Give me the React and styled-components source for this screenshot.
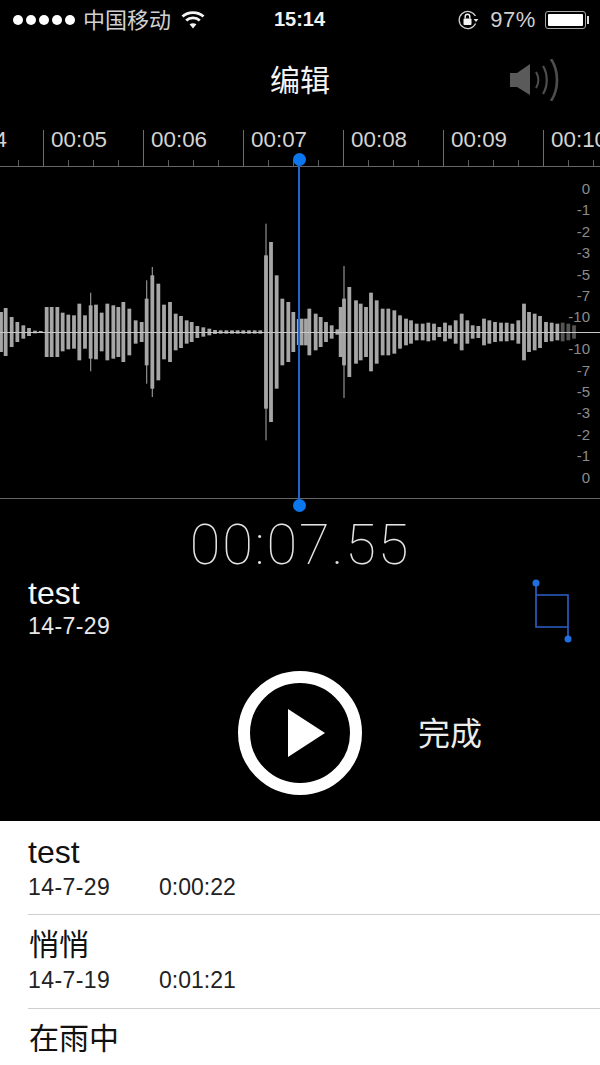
import React from 'react'
import styled, { createGlobalStyle } from 'styled-components'

const GlobalStyle = createGlobalStyle`
  html, body {
    margin: 0;
    padding: 0;
    background: #000;
    overflow: hidden;
  }
  * { box-sizing: border-box; }
`

const SANS = `"Liberation Sans", "Noto Sans CJK SC", sans-serif`

// [x, half height, thin spike half height, dim] in 3x crop units, centre line at 0
const LEFT_BARS = [
  [3, 60], [17, 72], [35, 45], [52, 30], [70, 20], [87, 12], [105, 4], [122, 3],
  [140, 75], [155, 75], [172, 75], [188, 58], [205, 52], [222, 50], [238, 85], [255, 50],
  [272, 80, 118], [288, 82], [305, 58], [322, 85], [340, 80], [355, 75], [370, 90], [388, 70],
  [407, 35], [425, 30], [440, 100, 155], [457, 170, 195], [475, 145], [492, 82], [510, 90],
  [527, 55], [543, 48], [560, 35], [575, 30], [592, 18], [610, 14], [628, 10], [645, 6],
  [662, 5], [679, 5], [696, 5], [713, 5], [730, 5], [747, 5], [764, 5], [781, 5],
  [798, 230, 325], [813, 270], [830, 170], [847, 100], [865, 90], [880, 60],
]
const RIGHT_BARS = [
  [5, 40], [18, 40], [28, 70], [47, 55], [62, 45], [78, 30], [95, 20], [112, 8],
  [122, 75], [132, 100, 198], [148, 135], [168, 95], [182, 85], [198, 75], [213, 118], [230, 95],
  [248, 70], [265, 70], [283, 65], [300, 50], [318, 40], [333, 35], [350, 25], [368, 25],
  [385, 28], [402, 25], [418, 15], [435, 28], [450, 20], [467, 35], [485, 55], [502, 35],
  [518, 20], [535, 18], [552, 40], [568, 35], [585, 30], [603, 28], [620, 28], [637, 25],
  [655, 35], [672, 85], [687, 60], [704, 55], [720, 48], [738, 30], [755, 28], [772, 25],
  [788, 28, 0, true], [805, 25, 0, true], [822, 20, 0, true],
]

const RULER = ['00:04', '00:05', '00:06', '00:07', '00:08', '00:09', '00:10']
const DB_TOP = ['0', '-1', '-2', '-3', '-5', '-7', '-10']
const DB_BOTTOM = ['-10', '-7', '-5', '-3', '-2', '-1', '0']

const RECORDINGS = [
  { title: 'test', date: '14-7-29', length: '0:00:22' },
  { title: '悄悄', date: '14-7-19', length: '0:01:21', cjk: true },
  { title: '在雨中', cjk: true },
]

const Screen = styled.div`
  width: 600px;
  height: 1065px;
  overflow: hidden;
  background: #fff;
  font-family: ${SANS};
`

const Dark = styled.section`
  position: relative;
  height: 821px;
  background: #000;
  color: #fff;
`

const StatusBar = styled.div`
  height: 40px;
  display: grid;
  grid-template-columns: 1fr auto 1fr;
  align-items: center;
  padding: 0 14px 1px 13px;
  font-size: 22px;
  color: #d0d0d0;
`

const StatusLeft = styled.div`
  display: flex;
  align-items: center;
`

const StatusRight = styled.div`
  display: flex;
  align-items: center;
  justify-content: flex-end;
`

const Signal = styled.span`
  width: 10px;
  height: 10px;
  margin-right: 3px;
  border-radius: 50%;
  background: #fff;
`

const Carrier = styled.span`
  margin: -4px 10px 0 5px;
`

const Clock = styled.span`
  font-weight: 700;
  font-size: 20px;
  color: #f2f2f2;
`

const Percent = styled.span`
  margin: 0 9px 0 11px;
  font-size: 22px;
  letter-spacing: 0.6px;
`

const Battery = styled.span`
  position: relative;
  width: 41px;
  height: 18px;
  padding: 2px;
  border: 1px solid #a8a8a8;
  border-radius: 3px;

  &::before {
    content: '';
    display: block;
    height: 100%;
    border-radius: 1px;
    background: #fff;
  }

  &::after {
    content: '';
    position: absolute;
    top: 4px;
    right: -4px;
    width: 2px;
    height: 8px;
    background: #ddd;
  }
`

const NavBar = styled.header`
  height: 80px;
  display: grid;
  grid-template-columns: 1fr auto 1fr;
  align-items: center;
`

const NavTitle = styled.h1`
  grid-column: 2;
  margin: -4px 0 0;
  font-size: 30px;
  font-weight: 400;
  color: #f4f4f4;
`

const SpeakerSlot = styled.div`
  display: flex;
  justify-content: flex-end;
  padding-right: 41px;
`

const Ruler = styled.div`
  height: 46px;
  display: flex;
  align-items: flex-end;
  margin-left: -57px;
  width: 700px;
`

const RulerCell = styled.div`
  flex: 0 0 100px;
  height: 36px;
  padding: 0 0 0 7px;
  border-left: 1px solid #6e6e6e;
  font-size: 22.4px;
  line-height: 20px;
  color: #d4d4d4;
  white-space: nowrap;
  background:
    linear-gradient(#5c5c5c, #5c5c5c) 24px 100% / 1px 6px no-repeat,
    linear-gradient(#5c5c5c, #5c5c5c) 49px 100% / 1px 6px no-repeat,
    linear-gradient(#5c5c5c, #5c5c5c) 74px 100% / 1px 6px no-repeat;
`

const Wave = styled.div`
  position: relative;
  height: 333px;
  border-top: 1px solid #666;
  border-bottom: 1px solid #666;
`

const WaveSvg = styled.svg`
  display: block;
  width: 600px;
  height: 331px;
  filter: blur(0.35px);
`

const DbScale = styled.div`
  position: absolute;
  top: 11px;
  right: 10px;
  display: flex;
  flex-direction: column;
  gap: 10.5px;
`

const DbGroup = styled.div`
  display: flex;
  flex-direction: column;
  align-items: flex-end;
`

const DbLabel = styled.span`
  height: 21.4px;
  font-size: 15px;
  line-height: 21.4px;
  color: #8c8c8c;
`

const Playhead = styled.div`
  position: absolute;
  top: 160px;
  left: 298px;
  width: 2px;
  height: 346px;
  background: #2164cc;

  &::before,
  &::after {
    content: '';
    position: absolute;
    left: -5px;
    width: 13px;
    height: 13px;
    border-radius: 50%;
    background: #0c76ee;
  }

  &::before { top: -7px; }
  &::after { bottom: -6px; }
`

const Timer = styled.div`
  padding-top: 18px;
  height: 74px;
  text-align: center;
  font-family: Roboto, Inter, sans-serif;
  font-weight: 100;
  font-size: 56px;
  line-height: 56px;
  letter-spacing: 1.8px;
  color: #e4e4e4;
`

const InfoRow = styled.div`
  display: flex;
  justify-content: space-between;
  height: 98px;
  padding: 2px 28px 0 28px;
`

const InfoTitle = styled.div`
  font-size: 32px;
  line-height: 36px;
  color: #f6f6f6;
`

const InfoDate = styled.div`
  margin-top: 2px;
  font-size: 23px;
  line-height: 26px;
  letter-spacing: 0.4px;
  color: #e8e8e8;
`

const CropButton = styled.div`
  margin-top: 3px;
`

const Controls = styled.div`
  display: grid;
  grid-template-columns: 1fr auto 1fr;
  align-items: center;
`

const PlayButton = styled.div`
  grid-column: 2;
  width: 124px;
  height: 124px;
  display: flex;
  align-items: center;
  justify-content: center;
  padding-left: 12px;
  border: 12px solid #fff;
  border-radius: 50%;
`

const Triangle = styled.span`
  width: 0;
  height: 0;
  border-left: 37px solid #fff;
  border-top: 24px solid transparent;
  border-bottom: 24px solid transparent;
`

const DoneLabel = styled.span`
  margin: -4px 0 0 56px;
  font-size: 32px;
  color: #ececec;
`

const List = styled.ul`
  margin: 0;
  padding: 0;
  list-style: none;
  color: #111;
`

const Row = styled.li`
  height: 94px;
  margin-left: 28px;
  padding-top: 13px;
  border-bottom: 1px solid #cfcfcf;

  &:last-child { border-bottom: 0; }
`

const RowTitle = styled.div`
  height: 36px;
  font-size: ${props => (props.$cjk ? '30px' : '32px')};
  line-height: 36px;
  ${props => props.$cjk && 'margin: -1px 0 1px 1px;'}
`

const RowMeta = styled.div`
  display: flex;
  margin-top: 4px;
  font-size: 23px;
  line-height: 26px;
  color: #222;
`

const RowDate = styled.span`
  width: 131px;
  letter-spacing: 0.4px;
`

function WifiIcon() {
  return (
    <svg width="24" height="20" viewBox="0 0 24 20" fill="none" stroke="#f4f4f4" strokeWidth="2.8">
      <path d="M1.5 6.5C7 1.2 17 1.2 22.5 6.5" />
      <path d="M5.2 10.5C9 7 15 7 18.8 10.5" />
      <path d="M12 18.5L8.6 14.3C10.4 12.8 13.6 12.8 15.4 14.3Z" fill="#f4f4f4" stroke="none" />
    </svg>
  )
}

function RotationLockIcon() {
  return (
    <svg width="22" height="22" viewBox="0 0 22 22" fill="none">
      <path d="M18.6 14.5A8.6 8.6 0 1 1 18.4 7" stroke="#cfcfcf" strokeWidth="1.3" />
      <path d="M16.6 10H21.4L19 13Z" fill="#e8e8e8" />
      <rect x="6.5" y="9.5" width="8" height="6.5" rx="1" fill="#f4f4f4" />
      <path d="M8.2 9.5V7.6A2.3 2.3 0 0 1 12.8 7.6V9.5" stroke="#f4f4f4" strokeWidth="1.4" />
    </svg>
  )
}

function SpeakerIcon() {
  return (
    <svg width="49" height="42" viewBox="0 0 49 42" fill="none">
      <path d="M0 14H7L20 5V36L7 28H0Z" fill="#5a5a5a" />
      <path d="M26 13C29 18 29 24 26 29" stroke="#4e4e4e" strokeWidth="2" />
      <path d="M33 7C38 15 38 27 33 35" stroke="#4e4e4e" strokeWidth="2.2" />
      <path d="M41 0C49 12 49 30 41 42" stroke="#4e4e4e" strokeWidth="2.6" />
    </svg>
  )
}

function CropIcon() {
  return (
    <svg width="40" height="66" viewBox="0 0 40 66" fill="none" stroke="#2a62c8" strokeWidth="1.6">
      <path d="M4 5V49H36" />
      <path d="M4 17H36V61" />
      <circle cx="4" cy="5" r="3.5" fill="#1f6fe0" stroke="none" />
      <circle cx="36" cy="61" r="3.5" fill="#1f6fe0" stroke="none" />
    </svg>
  )
}

function Bars({ data, offset }) {
  return data.map(([x, half, spike, dim]) => {
    const cx = offset + x / 3
    return (
      <g key={x}>
        {spike > 0 && <rect x={cx - 0.6} y={165 - spike / 3} width="1.2" height={(spike / 3) * 2} fill="#8f8f8f" />}
        <rect x={cx - 1.9} y={165 - half / 3} width="3.8" height={(half / 3) * 2} fill={dim ? '#555' : '#a6a6a6'} />
      </g>
    )
  })
}

function App() {
  return (
    <Screen>
      <GlobalStyle />
      <Dark>
        <StatusBar>
          <StatusLeft>
            {[0, 1, 2, 3, 4].map(i => <Signal key={i} />)}
            <Carrier>中国移动</Carrier>
            <WifiIcon />
          </StatusLeft>
          <Clock>15:14</Clock>
          <StatusRight>
            <RotationLockIcon />
            <Percent>97%</Percent>
            <Battery />
          </StatusRight>
        </StatusBar>

        <NavBar>
          <NavTitle>编辑</NavTitle>
          <SpeakerSlot>
            <SpeakerIcon />
          </SpeakerSlot>
        </NavBar>

        <Ruler>
          {RULER.map(label => <RulerCell key={label}>{label}</RulerCell>)}
        </Ruler>

        <Wave>
          <WaveSvg viewBox="0 0 600 331">
            <Bars data={LEFT_BARS} offset={0} />
            <rect x="296.8" y="152" width="3.4" height="26" fill="#8ea6cc" />
            <Bars data={RIGHT_BARS} offset={300} />
            <rect x="0" y="165" width="600" height="1" fill="#c8c8c8" />
          </WaveSvg>
          <DbScale>
            <DbGroup>
              {DB_TOP.map(label => <DbLabel key={label}>{label}</DbLabel>)}
            </DbGroup>
            <DbGroup>
              {DB_BOTTOM.map(label => <DbLabel key={label}>{label}</DbLabel>)}
            </DbGroup>
          </DbScale>
        </Wave>

        <Playhead />

        <Timer>00:07.55</Timer>

        <InfoRow>
          <div>
            <InfoTitle>test</InfoTitle>
            <InfoDate>14-7-29</InfoDate>
          </div>
          <CropButton>
            <CropIcon />
          </CropButton>
        </InfoRow>

        <Controls>
          <PlayButton>
            <Triangle />
          </PlayButton>
          <DoneLabel>完成</DoneLabel>
        </Controls>
      </Dark>

      <List>
        {RECORDINGS.map(item => (
          <Row key={item.title}>
            <RowTitle $cjk={item.cjk}>{item.title}</RowTitle>
            {item.date && (
              <RowMeta>
                <RowDate>{item.date}</RowDate>
                <span>{item.length}</span>
              </RowMeta>
            )}
          </Row>
        ))}
      </List>
    </Screen>
  )
}

export default App
